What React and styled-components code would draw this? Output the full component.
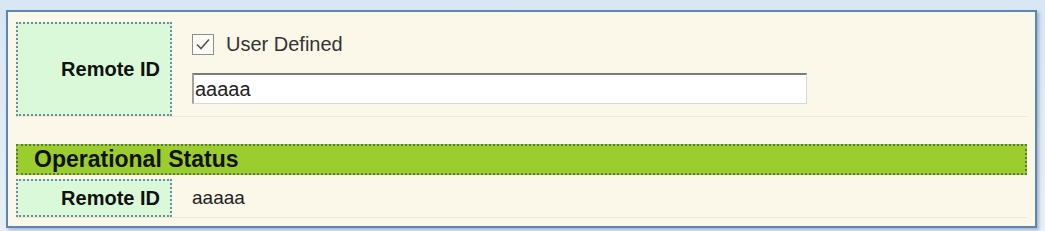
import styled, { createGlobalStyle } from "styled-components";

const GlobalStyle = createGlobalStyle`
  html, body {
    margin: 0;
    padding: 0;
    background: linear-gradient(#d9e6f3, #e8eff7);
    font-family: "Liberation Sans", Arial, sans-serif;
  }
  #root {
    padding: 10px 8px 3px 6px;
  }
`;

const Panel = styled.div`
  box-sizing: border-box;
  width: 1031px;
  height: 218px;
  background: #fbf7e9;
  border: 2px solid #5b87b3;
  box-shadow: 2px 2px 3px rgba(80, 110, 150, 0.45);
  padding: 10px 8px 8px 8px;
  display: flex;
  flex-direction: column;
`;

const Row = styled.div`
  display: grid;
  grid-template-columns: 156px 1fr;
  column-gap: 20px;
  border-bottom: 1px solid #efe8d4;
`;

const Label = styled.div`
  box-sizing: border-box;
  height: ${({ $h }) => $h}px;
  background: #d9f9d9;
  border: 2px dotted #6d8aa6;
  display: flex;
  align-items: center;
  justify-content: flex-end;
  padding-right: 10px;
  font-size: 20px;
  font-weight: bold;
  color: #111;
`;

const Field = styled.div`
  display: flex;
  flex-direction: column;
  padding-top: 11px;
  gap: 18px;
`;

const CheckLine = styled.label`
  display: flex;
  align-items: center;
  gap: 12px;
  font-size: 20px;
  color: #333;
  height: 22px;
`;

const Box = styled.span`
  box-sizing: border-box;
  width: 22px;
  height: 21px;
  border: 1px solid #8e8e8e;
  background: #fcfbf6;
  display: flex;
  align-items: center;
  justify-content: center;
`;

const TextInput = styled.input`
  box-sizing: border-box;
  width: 615px;
  height: 31px;
  border: 1px solid #d8d8d8;
  border-top: 2px solid #7c7c78;
  border-left: 2px solid #a3a39e;
  background: #fff;
  font-family: "Liberation Sans", Arial, sans-serif;
  font-size: 20px;
  color: #222;
  padding: 0 1px;
  outline: none;
`;

const Header = styled.div`
  box-sizing: border-box;
  height: 33px;
  margin-top: 27px;
  margin-bottom: 4px;
  background: #9ccd2e;
  border: 2px dotted #5d7a40;
  display: flex;
  align-items: center;
  padding-left: 16px;
  font-size: 23px;
  font-weight: bold;
  color: #111;
`;

const Value = styled.div`
  display: flex;
  align-items: center;
  font-size: 19px;
  color: #222;
`;

const Check = () => (
  <svg width="16" height="14" viewBox="0 0 16 14">
    <path d="M2 7.5 L6 11.5 L14 2.5" fill="none" stroke="#555" strokeWidth="1.6" />
  </svg>
);

export default function App() {
  return (
    <>
      <GlobalStyle />
      <Panel>
        <Row>
          <Label $h={94}>Remote ID</Label>
          <Field>
            <CheckLine>
              <Box>
                <Check />
              </Box>
              User Defined
            </CheckLine>
            <TextInput defaultValue="aaaaa" />
          </Field>
        </Row>
        <Header>Operational Status</Header>
        <Row>
          <Label $h={38}>Remote ID</Label>
          <Value>aaaaa</Value>
        </Row>
      </Panel>
    </>
  );
}
